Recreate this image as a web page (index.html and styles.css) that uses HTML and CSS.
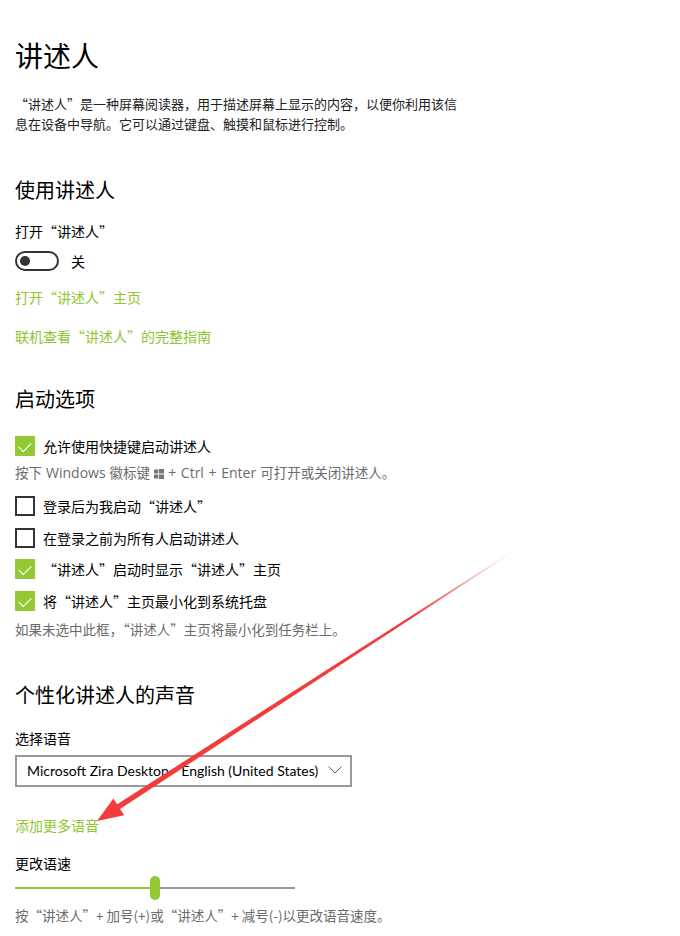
FILE: index.html
```html
<!DOCTYPE html>
<html>
<head>
    <meta charset="utf-8">
    <link rel="stylesheet" href="styles.css">
</head>
<body>
    <div class="page">
        <h1 class="title">讲述人</h1>
        <p class="intro">“讲述人”是一种屏幕阅读器，用于描述屏幕上显示的内容，以便你利用该信<br>息在设备中导航。它可以通过键盘、触摸和鼠标进行控制。</p>

        <h2 class="section">使用讲述人</h2>
        <div class="label">打开“讲述人”</div>
        <div class="toggle-row">
            <span class="toggle"><span class="knob"></span></span>
            <span class="toggle-text">关</span>
        </div>
        <a class="link link-home">打开“讲述人”主页</a>
        <a class="link link-guide">联机查看“讲述人”的完整指南</a>

        <h2 class="section section-start">启动选项</h2>
        <label class="check check-first"><span class="box on"></span>允许使用快捷键启动讲述人</label>
        <div class="hint hint-keys">按下 <span class="latin">Windows</span> 徽标键 <svg class="winlogo" width="10" height="10" viewBox="0 0 10 10"><rect x="0" y="0.5" width="4.3" height="4" fill="#767676"/><rect x="5" y="0" width="5" height="4.5" fill="#767676"/><rect x="0" y="5.5" width="4.3" height="4" fill="#767676"/><rect x="5" y="5.5" width="5" height="4.5" fill="#767676"/></svg> <span class="latin">+ Ctrl + Enter</span> 可打开或关闭讲述人。</div>
        <label class="check check-a"><span class="box"></span>登录后为我启动“讲述人”</label>
        <label class="check check-b"><span class="box"></span>在登录之前为所有人启动讲述人</label>
        <label class="check check-b"><span class="box on"></span>“讲述人”启动时显示“讲述人”主页</label>
        <label class="check check-b"><span class="box on"></span>将“讲述人”主页最小化到系统托盘</label>
        <div class="hint hint-tray">如果未选中此框，“讲述人”主页将最小化到任务栏上。</div>

        <h2 class="section section-voice">个性化讲述人的声音</h2>
        <div class="label label-voice">选择语音</div>
        <div class="select">
            <span class="select-text">Microsoft Zira Desktop - English (United States)</span>
            <svg class="chevron" width="14" height="8" viewBox="0 0 14 8"><path d="M0.5 0.5 L7 7 L13.5 0.5" fill="none" stroke="#666" stroke-width="1"/></svg>
        </div>
        <a class="link link-more">添加更多语音</a>
        <div class="label label-speed">更改语速</div>
        <div class="slider">
            <span class="track-on"></span>
            <span class="thumb"></span>
            <span class="track-off"></span>
        </div>
        <div class="hint hint-speed">按“讲述人”+ 加号(+)或“讲述人”+ 减号(-)以更改语音速度。</div>
    </div>

    <svg class="arrow" width="680" height="936" viewBox="0 0 680 936">
        <defs>
            <linearGradient id="fade" gradientUnits="userSpaceOnUse" x1="118" y1="807" x2="512" y2="551">
                <stop offset="0" stop-color="#f23c3c" stop-opacity="1"/>
                <stop offset="0.75" stop-color="#f23c3c" stop-opacity="1"/>
                <stop offset="1" stop-color="#f23c3c" stop-opacity="0"/>
            </linearGradient>
        </defs>
        <polygon points="119.6,809.3 116.4,804.7 511.7,551.6 512.3,552.4" fill="url(#fade)"/>
        <polygon points="97,821 113.4,798.5 124.2,815.3" fill="#f23c3c"/>
    </svg>
</body>
</html>
```

FILE: styles.css
```css
body {
    margin: 0;
    padding: 0;
    background-color: #fff;
    color: #000;
    font-family: "Noto Sans CJK SC", "Noto Sans", sans-serif;
    font-size: 14px;
    line-height: 20px;
}

.page {
    padding: 37px 15px 0 15px;
}

.title {
    margin: 0;
    font-size: 28px;
    font-weight: normal;
    line-height: 36px;
}

.intro {
    margin: 21px 0 0 0;
    color: #222;
    font-size: 13px;
    line-height: 20px;
}

.section {
    margin: 42px 0 0 0;
    font-size: 20px;
    font-weight: normal;
    line-height: 28px;
}

.section-start {
    margin-top: 39px;
}

.label {
    margin-top: 17px;
}

.label-voice {
    margin-top: 19px;
}

.label-speed {
    margin-top: 18px;
}

.toggle-row {
    display: flex;
    align-items: center;
    gap: 12px;
    height: 20px;
    margin-top: 10px;
}

.toggle {
    display: flex;
    align-items: center;
    box-sizing: border-box;
    width: 44px;
    height: 20px;
    padding-left: 3px;
    border: 2px solid #333;
    border-radius: 10px;
}

.knob {
    width: 10px;
    height: 10px;
    border-radius: 50%;
    background-color: #333;
}

.link {
    display: block;
    color: #8ec530;
    text-decoration: none;
}

.link-home {
    margin-top: 16px;
}

.link-guide {
    margin-top: 19px;
}

.link-more {
    margin-top: 28px;
}

.check {
    display: flex;
    align-items: center;
    gap: 8px;
    height: 20px;
}

.check-first {
    margin-top: 23px;
}

.check-a {
    margin-top: 13px;
}

.check-b {
    margin-top: 11.5px;
}

.box {
    box-sizing: border-box;
    width: 20px;
    height: 20px;
    border: 2px solid #333;
    flex-shrink: 0;
}

.box.on {
    border: none;
    background-color: #93c932;
    position: relative;
}

.box.on::after {
    content: "";
    position: absolute;
    left: 4px;
    top: 2px;
    width: 11px;
    height: 6px;
    border-left: 1.5px solid #fff;
    border-bottom: 1.5px solid #fff;
    transform: translate(0, 4px) rotate(-45deg);
}

.hint {
    color: #6b6b6b;
    font-size: 13.5px;
}

.hint-keys {
    margin-top: 6px;
    word-spacing: 1px;
}

.latin {
    font-family: "Open Sans", sans-serif;
    font-size: 14px;
}

.winlogo {
    vertical-align: -1px;
}

.hint-tray {
    margin-top: 8px;
}

.section-voice {
    margin-top: 42px;
}

.select {
    display: flex;
    align-items: center;
    justify-content: space-between;
    box-sizing: border-box;
    width: 337px;
    height: 32px;
    margin-top: 7px;
    padding: 0 8px 0 10px;
    border: 2px solid #999;
}

.select-text {
    font-family: "Lato", sans-serif;
    font-size: 14px;
    white-space: nowrap;
}

.chevron {
    margin-top: -2px;
}

.slider {
    display: flex;
    align-items: center;
    width: 280px;
    height: 24px;
    margin-top: 3px;
}

.track-on {
    width: 135px;
    height: 2px;
    background-color: #93c932;
}

.thumb {
    width: 10px;
    height: 24px;
    border-radius: 5px;
    background-color: #93c932;
}

.track-off {
    flex: 1;
    height: 2px;
    background-color: #999;
}

.hint-speed {
    margin-top: 5px;
}

.arrow {
    position: absolute;
    left: 0;
    top: 0;
    pointer-events: none;
}
```
